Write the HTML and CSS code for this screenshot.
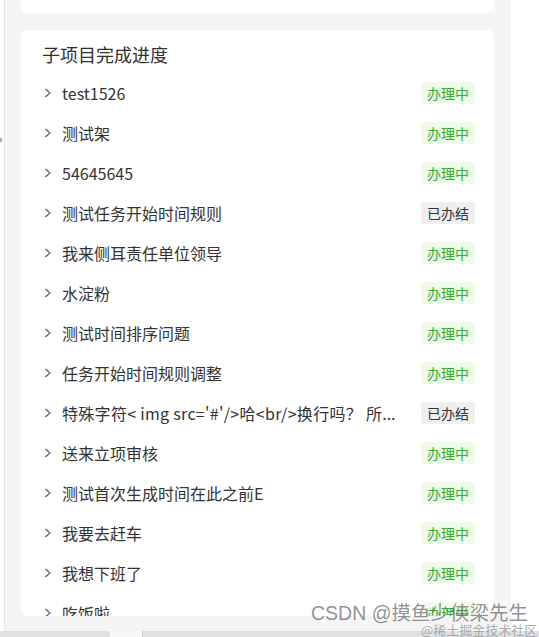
FILE: index.html
```html
<!DOCTYPE html>
<html lang="zh">
<head>
<meta charset="utf-8">
<link rel="stylesheet" href="styles.css">
</head>
<body>
<div class="page">
  <div class="panel">
    <div class="card card-top"></div>
    <div class="card card-progress">
      <div class="title">子项目完成进度</div>
      <div class="list">
        <div class="row"><svg class="chev" viewBox="0 0 8 10"><path d="M1.5 1 L6 5 L1.5 9" /></svg><span class="name">test1526</span><span class="tag doing">办理中</span></div>
        <div class="row"><svg class="chev" viewBox="0 0 8 10"><path d="M1.5 1 L6 5 L1.5 9" /></svg><span class="name">测试架</span><span class="tag doing">办理中</span></div>
        <div class="row"><svg class="chev" viewBox="0 0 8 10"><path d="M1.5 1 L6 5 L1.5 9" /></svg><span class="name">54645645</span><span class="tag doing">办理中</span></div>
        <div class="row"><svg class="chev" viewBox="0 0 8 10"><path d="M1.5 1 L6 5 L1.5 9" /></svg><span class="name">测试任务开始时间规则</span><span class="tag done">已办结</span></div>
        <div class="row"><svg class="chev" viewBox="0 0 8 10"><path d="M1.5 1 L6 5 L1.5 9" /></svg><span class="name">我来侧耳责任单位领导</span><span class="tag doing">办理中</span></div>
        <div class="row"><svg class="chev" viewBox="0 0 8 10"><path d="M1.5 1 L6 5 L1.5 9" /></svg><span class="name">水淀粉</span><span class="tag doing">办理中</span></div>
        <div class="row"><svg class="chev" viewBox="0 0 8 10"><path d="M1.5 1 L6 5 L1.5 9" /></svg><span class="name">测试时间排序问题</span><span class="tag doing">办理中</span></div>
        <div class="row"><svg class="chev" viewBox="0 0 8 10"><path d="M1.5 1 L6 5 L1.5 9" /></svg><span class="name">任务开始时间规则调整</span><span class="tag doing">办理中</span></div>
        <div class="row"><svg class="chev" viewBox="0 0 8 10"><path d="M1.5 1 L6 5 L1.5 9" /></svg><span class="name"><span class="wide">特殊字符&lt; img src='#'/&gt;哈&lt;br/&gt;换行吗？ 所</span>...</span><span class="tag done">已办结</span></div>
        <div class="row"><svg class="chev" viewBox="0 0 8 10"><path d="M1.5 1 L6 5 L1.5 9" /></svg><span class="name">送来立项审核</span><span class="tag doing">办理中</span></div>
        <div class="row"><svg class="chev" viewBox="0 0 8 10"><path d="M1.5 1 L6 5 L1.5 9" /></svg><span class="name">测试首次生成时间在此之前E</span><span class="tag doing">办理中</span></div>
        <div class="row"><svg class="chev" viewBox="0 0 8 10"><path d="M1.5 1 L6 5 L1.5 9" /></svg><span class="name">我要去赶车</span><span class="tag doing">办理中</span></div>
        <div class="row"><svg class="chev" viewBox="0 0 8 10"><path d="M1.5 1 L6 5 L1.5 9" /></svg><span class="name">我想下班了</span><span class="tag doing">办理中</span></div>
        <div class="row"><svg class="chev" viewBox="0 0 8 10"><path d="M1.5 1 L6 5 L1.5 9" /></svg><span class="name">吃饭啦</span><span class="tag doing">办理中</span></div>
      </div>
    </div>
  </div>
  <div class="bottom-bar">
    <div class="seg seg-a"></div>
    <div class="seg seg-gap"></div>
    <div class="seg seg-b"></div>
  </div>
  <div class="handle"></div>
  <div class="watermark">CSDN @摸鱼少侠梁先生</div>
  <div class="watermark-small">@稀土掘金技术社区</div>
</div>
</body>
</html>
```
FILE: styles.css
```css
* { box-sizing: border-box; }
html, body {
  margin: 0;
  padding: 0;
  background: #ffffff;
  font-family: "Noto Sans CJK SC", "Noto Sans", sans-serif;
  color: #333333;
}
.page {
  position: relative;
  width: 539px;
  height: 637px;
  overflow: hidden;
  display: flex;
  flex-direction: column;
}
.panel {
  margin-left: 4px;
  width: 507px;
  height: 631px;
  background: #f5f5f5;
  border-left: 1px solid #e6e6e6;
  padding: 0 17px 0 16px;
  display: flex;
  flex-direction: column;
  gap: 17px;
}
.card {
  background: #ffffff;
  border-radius: 6px;
}
.card-top {
  height: 13px;
  border-radius: 0 0 6px 6px;
}
.card-progress {
  height: 586px;
  display: flex;
  flex-direction: column;
  overflow: hidden;
  padding: 0 19px 0 21px;
}
.title {
  margin-top: 11px;
  font-size: 18px;
  line-height: 26px;
  color: #303030;
  margin-bottom: 6px;
}
.list {
  display: flex;
  flex-direction: column;
}
.row {
  height: 40px;
  flex: none;
  display: flex;
  align-items: center;
  gap: 10px;
}
.chev {
  width: 8px;
  height: 10px;
  margin-left: 2px;
  flex: none;
  fill: none;
  stroke: #555;
  stroke-width: 1.1;
}
.name {
  flex: 1;
  min-width: 0;
  font-size: 16px;
  white-space: nowrap;
  overflow: hidden;
  text-overflow: ellipsis;
  color: #333;
  margin-right: 2px;
}
.wide {
  letter-spacing: 0.3px;
}
.tag {
  flex: none;
  height: 22px;
  line-height: 22px;
  padding: 0 6px;
  font-size: 14px;
  border-radius: 4px;
}
.tag.doing {
  background: #eefaea;
  color: #2fae2f;
}
.tag.done {
  background: #efefef;
  color: #333333;
}
.bottom-bar {
  height: 6px;
  display: flex;
}
.seg-a { width: 110px; background: #dde1e4; }
.seg-gap { width: 33px; background: #f7f7f7; border-right: 1px solid #d0d0d0; }
.seg-b { flex: 1; background: #dde1e4; }
.handle {
  position: absolute;
  left: 0;
  top: 137px;
  width: 0;
  height: 0;
  border-top: 3px solid transparent;
  border-bottom: 3px solid transparent;
  border-left: 3px solid #aaaaaa;
}
.watermark {
  position: absolute;
  left: 311px;
  top: 600px;
  font-size: 19.5px;
  line-height: 26px;
  color: rgba(110, 110, 110, 0.75);
  white-space: nowrap;
  font-family: "Liberation Sans", "Noto Sans CJK SC", sans-serif;
}
.watermark-small {
  position: absolute;
  left: 421px;
  top: 622px;
  font-size: 13px;
  line-height: 16px;
  color: rgba(140, 140, 140, 0.7);
  white-space: nowrap;
  font-family: "Noto Sans CJK SC", sans-serif;
}
```
